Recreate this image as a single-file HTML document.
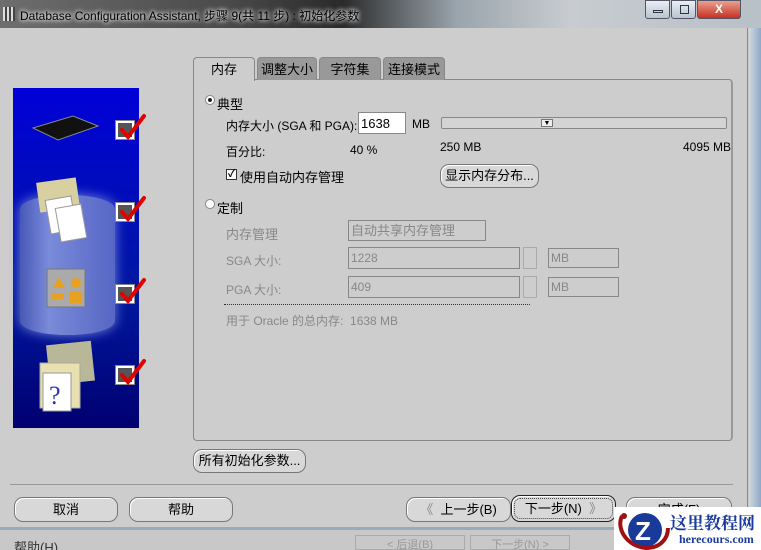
<!DOCTYPE html>
<html style="width:761px;height:550px;overflow:hidden"><head><meta charset="utf-8"><style>
*{box-sizing:border-box;margin:0;padding:0}
html,body{width:761px;height:550px;overflow:hidden}
body{background:#cdcdcd;font-family:"Liberation Sans","Noto Sans CJK SC",sans-serif;font-size:12px;color:#000;position:relative}
.abs{position:absolute;white-space:nowrap}
.title{left:0;top:0;width:761px;height:28px;background:linear-gradient(90deg,#6e6e6e 0%,#4a4a4a 30%,#2a2a2a 45%,#9aa4ac 60%,#c8ccd0 75%,#b8c0c8 100%);}
.title span{position:absolute;left:20px;top:7px;font-size:12px;color:#000;text-shadow:0 0 6px #fff,0 0 4px #fff}
.wbtn{top:0;height:19px;border:1px solid #556;border-radius:0 0 3px 3px;background:linear-gradient(#e8eef4,#b8c4d0)}
.tab{top:57px;height:23px;border:1px solid #888;border-bottom:none;border-radius:4px 4px 0 0;background:#999;font-size:13px;text-align:center;line-height:24px}
.panel{left:193px;top:79px;width:540px;height:362px;border:1px solid #888;border-right:2px solid #999;background:#cdcdcd;border-radius:0 4px 4px 4px}
.btn{border:1px solid #777;border-radius:9px;background:#d8d8d8;text-align:center;font-size:13px;box-shadow:inset 1px 1px 0 #fff}
.gray{color:#888}
.field{border:1px solid #888;background:#cdcdcd;color:#888;padding-left:2px;font-size:12px}
.chk{width:18px;height:18px;border:2px solid #fff;background:#555;outline:1px solid #888}
</style></head><body>
<div class="abs title"><span>Database Configuration Assistant, 步骤 9(共 11 步) : 初始化参数</span>
<div class="abs" style="left:3px;top:7px;width:12px;height:14px;background:repeating-linear-gradient(90deg,#ddd 0 2px,#444 2px 4px)"></div></div>
<div class="abs wbtn" style="left:645px;width:25px"><div class="abs" style="left:7px;top:9px;width:10px;height:3px;border:1px solid #334"></div></div>
<div class="abs wbtn" style="left:671px;width:25px"><div class="abs" style="left:8px;top:4px;width:9px;height:9px;border:1px solid #334"></div></div>
<div class="abs wbtn" style="left:697px;width:44px;background:linear-gradient(#e8a090,#c83020);color:#fff;font-weight:bold;text-align:center;line-height:17px">X</div>
<div class="abs" style="left:0;top:28px;width:748px;height:499px;background:#cdcdcd;border-right:1px solid #888"></div>
<div class="abs" style="left:749px;top:28px;width:12px;height:499px;background:linear-gradient(90deg,#d0d8e0,#8fa8c8)"></div>

<div class="abs" style="left:13px;top:88px;width:126px;height:340px;background:linear-gradient(180deg,#0000d8,#0018a0 60%,#000070)"></div>
<div class="abs" style="left:20px;top:195px;width:95px;height:140px;border-radius:45px/14px;background:linear-gradient(90deg,#5060b8,#8898e0 30%,#6070c8);opacity:.9;box-shadow:0 0 12px #8090e0"></div>
<svg class="abs" style="left:13px;top:88px" width="126" height="340">
<polygon points="20,40 60,28 85,38 45,52" fill="#111" stroke="#888"/>
<rect x="25" y="92" width="40" height="30" fill="#d8d0a0" transform="rotate(-8 45 107)"/>
<rect x="35" y="110" width="26" height="34" fill="#fff" stroke="#999" transform="rotate(-10 48 127)"/>
<rect x="45" y="118" width="26" height="34" fill="#fff" stroke="#999" transform="rotate(-10 58 135)"/>
<rect x="34" y="181" width="38" height="38" fill="#aaa" stroke="#777"/>
<polygon points="40,200 46,189 52,200" fill="#e8a020"/><circle cx="63" cy="195" r="5" fill="#e8a020"/>
<rect x="38" y="205" width="12" height="6" fill="#e8a020"/><rect x="57" y="203" width="12" height="12" fill="#e8a020"/>
<rect x="35" y="255" width="45" height="40" fill="#b8b898" transform="rotate(-6 57 275)"/>
<rect x="27" y="275" width="40" height="45" fill="#e8e0b0" stroke="#aa9"/>
<rect x="30" y="285" width="28" height="38" fill="#fff" stroke="#999"/>
<text x="36" y="316" font-size="26" fill="#3030c0" font-family="Liberation Serif">?</text>
</svg>
<div class="abs chk" style="left:116px;top:121px"></div>
<div class="abs chk" style="left:116px;top:203px"></div>
<div class="abs chk" style="left:116px;top:285px"></div>
<div class="abs chk" style="left:116px;top:366px"></div>
<svg class="abs" style="left:116px;top:110px" width="32" height="290">
<g fill="none" stroke="#e00000" stroke-width="4" stroke-linecap="round">
<path d="M6,20 L12,27 L28,6"/><path d="M6,102 L12,109 L28,88"/><path d="M6,184 L12,191 L28,170"/><path d="M6,265 L12,272 L28,251"/></g></svg>

<div class="abs panel"></div>
<div class="abs tab" style="left:193px;width:62px;background:#cdcdcd;height:24px;z-index:2">内存</div>
<div class="abs tab" style="left:257px;width:60px">调整大小</div>
<div class="abs tab" style="left:319px;width:62px">字符集</div>
<div class="abs tab" style="left:383px;width:62px">连接模式</div>

<div class="abs" style="left:205px;top:95px;width:10px;height:10px;border-radius:50%;background:#fff;border:1px solid #888"><div style="margin:2px;width:4px;height:4px;border-radius:50%;background:#222"></div></div>
<div class="abs" style="left:217px;top:94px;font-size:13px">典型</div>
<div class="abs" style="left:226px;top:117px;font-size:12px">内存大小 (SGA 和 PGA):</div>
<div class="abs" style="left:358px;top:112px;width:48px;height:22px;background:#fff;border:1px solid #888;font-size:13px;padding:3px 2px">1638</div>
<div class="abs" style="left:412px;top:117px">MB</div>
<div class="abs" style="left:441px;top:117px;width:286px;height:12px;border:1px solid #888;border-radius:2px;background:#d4d4d4"></div>
<div class="abs" style="left:541px;top:119px;width:12px;height:8px;background:#eee;border:1px solid #777;font-size:7px;text-align:center;line-height:7px">▼</div>
<div class="abs" style="left:226px;top:143px">百分比:</div>
<div class="abs" style="left:350px;top:143px">40 %</div>
<div class="abs" style="left:440px;top:140px">250 MB</div>
<div class="abs" style="left:683px;top:140px">4095 MB</div>
<div class="abs" style="left:226px;top:169px;width:11px;height:11px;border:1px solid #333;background:#fff;font-size:10px;line-height:9px;text-align:center;font-weight:bold">✓</div>
<div class="abs" style="left:240px;top:167px;font-size:13px">使用自动内存管理</div>
<div class="abs btn" style="left:440px;top:164px;width:99px;height:24px;line-height:22px">显示内存分布...</div>
<div class="abs" style="left:205px;top:199px;width:10px;height:10px;border-radius:50%;background:#fff;border:1px solid #888"></div>
<div class="abs" style="left:217px;top:198px;font-size:13px">定制</div>
<div class="abs gray" style="left:226px;top:224px;font-size:13px">内存管理</div>
<div class="abs field" style="left:348px;top:220px;width:138px;height:21px;line-height:19px;font-size:13px">自动共享内存管理</div>
<div class="abs gray" style="left:226px;top:252px">SGA 大小:</div>
<div class="abs field" style="left:348px;top:247px;width:172px;height:22px;line-height:20px">1228</div>
<div class="abs" style="left:523px;top:247px;width:14px;height:22px;border:1px solid #aaa"></div>
<div class="abs field" style="left:548px;top:248px;width:71px;height:20px;line-height:18px">MB</div>
<div class="abs gray" style="left:226px;top:281px">PGA 大小:</div>
<div class="abs field" style="left:348px;top:276px;width:172px;height:22px;line-height:20px">409</div>
<div class="abs" style="left:523px;top:276px;width:14px;height:22px;border:1px solid #aaa"></div>
<div class="abs field" style="left:548px;top:277px;width:71px;height:20px;line-height:18px">MB</div>
<div class="abs" style="left:224px;top:304px;width:306px;border-top:1px dotted #333"></div>
<div class="abs gray" style="left:226px;top:312px">用于 Oracle 的总内存:&nbsp;&nbsp;1638 MB</div>

<div class="abs btn" style="left:193px;top:449px;width:113px;height:24px;line-height:22px">所有初始化参数...</div>
<div class="abs" style="left:10px;top:484px;width:723px;border-top:1px solid #999"></div>
<div class="abs btn" style="left:14px;top:497px;width:104px;height:25px;line-height:23px">取消</div>
<div class="abs btn" style="left:129px;top:497px;width:104px;height:25px;line-height:23px">帮助</div>
<div class="abs btn" style="left:406px;top:497px;width:105px;height:25px;line-height:23px"><span style="color:#888">《</span>&nbsp;&nbsp;上一步(B)</div>
<div class="abs btn" style="left:511px;top:495px;width:105px;height:27px;line-height:25px;border:1px solid #222;outline:1px dotted #444;outline-offset:-4px">下一步(N)&nbsp;&nbsp;<span style="color:#888">》</span></div>
<div class="abs btn" style="left:626px;top:497px;width:106px;height:25px;line-height:23px">完成(F)</div>

<div class="abs" style="left:0;top:527px;width:761px;height:23px;background:#c8c8c8;border-top:3px solid #9ab"></div>
<div class="abs" style="left:14px;top:537px;font-size:13px;color:#333">帮助(H)</div>
<div class="abs" style="left:355px;top:535px;width:110px;height:15px;border:1px solid #aaa;color:#999;font-size:11px;text-align:center">&lt; 后退(B)</div>
<div class="abs" style="left:470px;top:535px;width:100px;height:15px;border:1px solid #aaa;color:#999;font-size:11px;text-align:center">下一步(N) &gt;</div>

<div class="abs" style="left:614px;top:507px;width:147px;height:43px;background:#fff"></div>
<svg class="abs" style="left:616px;top:508px" width="56" height="42">
<circle cx="29" cy="22" r="17" fill="#1a3a9a"/>
<path d="M6,8 C0,20 10,38 30,40 C45,40 52,30 52,20" fill="none" stroke="#a01010" stroke-width="4"/>
<circle cx="8" cy="8" r="3" fill="#a01010"/>
<text x="19" y="32" font-size="26" font-weight="bold" fill="#fff" font-family="Liberation Sans">Z</text></svg>
<div class="abs" style="left:670px;top:509px;font-size:17px;font-weight:bold;color:#1a3aa0;font-family:'Liberation Serif','Noto Serif CJK SC',serif">这里教程网</div>
<div class="abs" style="left:679px;top:532px;font-size:12px;font-weight:bold;color:#1a3aa0;font-family:'Liberation Serif',serif">herecours.com</div>
</body></html>
